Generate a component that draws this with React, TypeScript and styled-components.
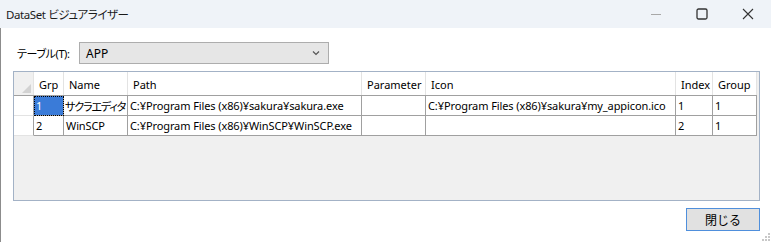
import React from "react";
import styled, { createGlobalStyle } from "styled-components";

const GlobalStyle = createGlobalStyle`
  html, body {
    margin: 0;
    padding: 0;
    background: #ffffff;
  }
  body {
    font-family: "Noto Sans", "Noto Sans CJK JP", sans-serif;
    font-size: 11px;
    color: #000;
  }
`;

interface Row {
  grp: string;
  name: string;
  path: string;
  parameter: string;
  icon: string;
  index: string;
  group: string;
}

const rows: Row[] = [
  {
    grp: "1",
    name: "サクラエディタ",
    path: "C:¥Program Files (x86)¥sakura¥sakura.exe",
    parameter: "",
    icon: "C:¥Program Files (x86)¥sakura¥my_appicon.ico",
    index: "1",
    group: "1",
  },
  {
    grp: "2",
    name: "WinSCP",
    path: "C:¥Program Files (x86)¥WinSCP¥WinSCP.exe",
    parameter: "",
    icon: "",
    index: "2",
    group: "1",
  },
];

const columns = ["Grp", "Name", "Path", "Parameter", "Icon", "Index", "Group"];
const colTemplate = "20px 30px 64px 234px 64px 250px 37px 44px";

// kana are set wider than the UI font, so squeeze them to fit the column
const isWide = (s: string) => /[^\x00-\x7f¥]/.test(s);

const App: React.FC = () => {
  return (
    <>
      <GlobalStyle />
      <Window>
        <TitleBar>
          <Title>DataSet ビジュアライザー</Title>
          <Controls>
            <CtrlButton>
              <svg width="12" height="12" viewBox="0 0 12 12">
                <line x1="1" y1="6.5" x2="11" y2="6.5" stroke="#a8a8a8" strokeWidth="1" />
              </svg>
            </CtrlButton>
            <CtrlButton>
              <svg width="12" height="12" viewBox="0 0 12 12">
                <rect x="1" y="1" width="10" height="10" rx="1.5" fill="none" stroke="#333" strokeWidth="1.3" />
              </svg>
            </CtrlButton>
            <CtrlButton>
              <svg width="12" height="12" viewBox="0 0 12 12">
                <path d="M1 1 L11 11 M11 1 L1 11" stroke="#333" strokeWidth="1.1" />
              </svg>
            </CtrlButton>
          </Controls>
        </TitleBar>
        <Body>
          <TableRow>
            <Label>テーブル(T):</Label>
            <Combo>
              <span>APP</span>
              <svg width="8" height="6" viewBox="0 0 8 6">
                <path d="M1 1.5 L4 4.5 L7 1.5" fill="none" stroke="#555" strokeWidth="1.2" />
              </svg>
            </Combo>
          </TableRow>
          <Grid>
            <HeaderRow>
              <CornerCell>
                <svg width="9" height="9" viewBox="0 0 9 9">
                  <path d="M9 0 L9 9 L0 9 Z" fill="#d2d2d2" />
                </svg>
              </CornerCell>
              {columns.map((c) => (
                <HeaderCell key={c}>{c}</HeaderCell>
              ))}
            </HeaderRow>
            {rows.map((r, i) => (
              <DataRow key={i}>
                <RowHeader />
                <Cell selected={i === 0}>{r.grp}</Cell>
                <Cell tight={isWide(r.name)}>{r.name}</Cell>
                <Cell>{r.path}</Cell>
                <Cell>{r.parameter}</Cell>
                <Cell>{r.icon}</Cell>
                <Cell>{r.index}</Cell>
                <Cell>{r.group}</Cell>
              </DataRow>
            ))}
          </Grid>
          <Footer>
            <CloseButton>閉じる</CloseButton>
          </Footer>
          <Grip>
            <svg width="12" height="12" viewBox="0 0 12 12">
              {[
                [9, 3],
                [6, 6],
                [9, 6],
                [3, 9],
                [6, 9],
                [9, 9],
              ].map(([x, y]) => (
                <rect key={`${x}-${y}`} x={x} y={y} width="2" height="2" fill="#c8c8c8" />
              ))}
            </svg>
          </Grip>
        </Body>
      </Window>
    </>
  );
};

const Window = styled.div`
  width: 771px;
  height: 242px;
  display: flex;
  flex-direction: column;
  overflow: hidden;
`;

const TitleBar = styled.div`
  height: 28px;
  flex: none;
  background: #eff3f8;
  display: flex;
  align-items: center;
  justify-content: space-between;
`;

const Title = styled.div`
  padding-left: 6px;
  font-size: 11.5px;
  color: #1a1a1a;
  font-feature-settings: "palt";
  letter-spacing: -0.4px;
`;

const Controls = styled.div`
  display: flex;
  height: 100%;
`;

const CtrlButton = styled.div`
  width: 46px;
  height: 100%;
  display: flex;
  align-items: center;
  justify-content: center;
`;

const Body = styled.div`
  position: relative;
  flex: 1;
  border-left: 1px solid #8c8c8c;
  display: flex;
  flex-direction: column;
  padding: 14px 11px 0 12px;
`;

const TableRow = styled.div`
  display: flex;
  align-items: center;
  padding-left: 4px;
`;

const Label = styled.div`
  width: 62px;
  font-size: 11px;
  font-feature-settings: "palt";
  letter-spacing: -0.4px;
`;

const Combo = styled.div`
  width: 250px;
  height: 22px;
  box-sizing: border-box;
  border: 1px solid #adadad;
  background: #e6e6e6;
  display: flex;
  align-items: center;
  justify-content: space-between;
  padding: 0 8px 0 6px;
  font-size: 12px;
`;

const Grid = styled.div`
  margin-top: 7px;
  height: 128px;
  border: 1px solid #a3b2c6;
  background: #f0f0f0;
`;

const HeaderRow = styled.div`
  display: grid;
  grid-template-columns: ${colTemplate};
  height: 23px;
  border-bottom: 1px solid #a0a0a0;
  width: 743px;
`;

const CornerCell = styled.div`
  background: #f0f0f0;
  border-right: 1px solid #e3e3e3;
  display: flex;
  align-items: flex-end;
  justify-content: flex-end;
  padding: 0 2px 2px 0;
`;

const HeaderCell = styled.div`
  background: #ffffff;
  border-right: 1px solid #e3e3e3;
  padding: 5px 0 0 5px;
  box-sizing: border-box;
  white-space: nowrap;
  overflow: hidden;
`;

const DataRow = styled.div`
  display: grid;
  grid-template-columns: ${colTemplate};
  height: 20px;
  width: 743px;
`;

const RowHeader = styled.div`
  background: #ffffff;
  border-right: 1px solid #a0a0a0;
  border-bottom: 1px solid #e3e3e3;
`;

const Cell = styled.div<{ selected?: boolean; tight?: boolean }>`
  background: ${({ selected }) => (selected ? "#3a7bd8" : "#ffffff")};
  color: ${({ selected }) => (selected ? "#ffffff" : "#000000")};
  outline: ${({ selected }) => (selected ? "1px dotted #000" : "none")};
  outline-offset: -1px;
  border-right: 1px solid #a0a0a0;
  border-bottom: 1px solid #a0a0a0;
  box-sizing: border-box;
  padding: 2px 0 0 ${({ tight }) => (tight ? "1px" : "2px")};
  white-space: nowrap;
  overflow: hidden;
  font-feature-settings: "palt";
  letter-spacing: ${({ tight }) => (tight ? "-1.1px" : "-0.1px")};
`;

const Footer = styled.div`
  display: flex;
  justify-content: flex-end;
  margin-top: 7px;
`;

const CloseButton = styled.div`
  width: 74px;
  height: 23px;
  box-sizing: border-box;
  border: 1px solid #4f8fdc;
  background: #e1e1e1;
  display: flex;
  align-items: center;
  justify-content: center;
  font-size: 12px;
`;

const Grip = styled.div`
  position: absolute;
  right: 0;
  bottom: 0;
  line-height: 0;
`;

export default App;
